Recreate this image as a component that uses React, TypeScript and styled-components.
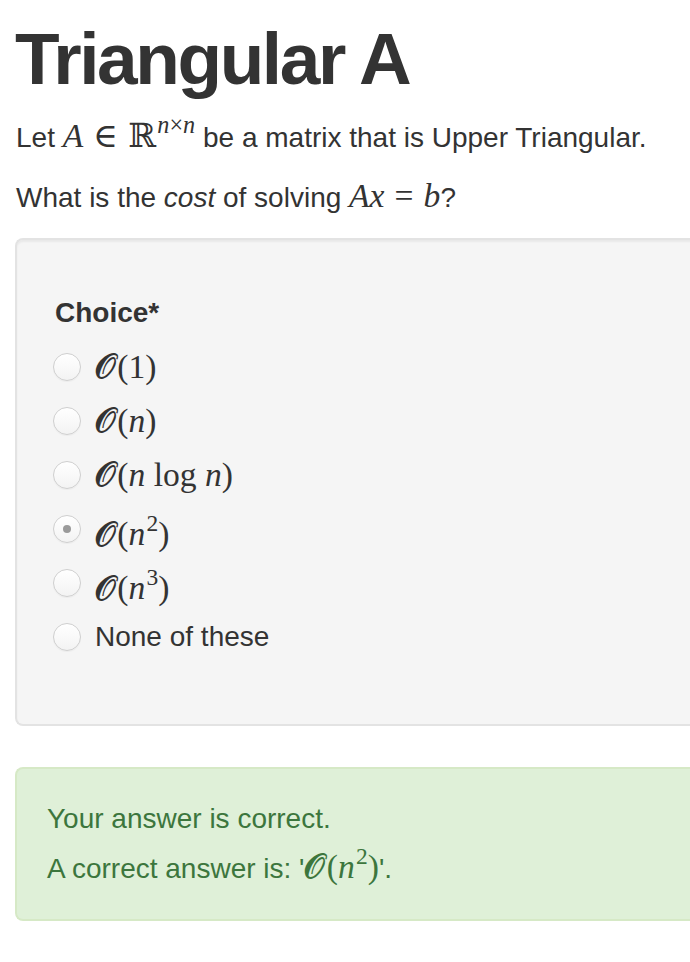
import React from 'react';
import styled, { createGlobalStyle } from 'styled-components';

const GlobalStyle = createGlobalStyle`
  html, body {
    margin: 0;
    padding: 0;
    background: #fff;
    overflow-x: hidden;
  }
  body {
    font-family: "Liberation Sans", Arial, sans-serif;
    font-size: 28px;
    line-height: 40px;
    color: #333;
  }
`;

const Page = styled.div`
  width: calc(100% + 20px);
  padding: 19px 0 40px 15px;
  box-sizing: border-box;
`;

const Title = styled.h1`
  margin: 0 0 20px 0;
  font-size: 73px;
  line-height: 79px;
  font-weight: 700;
  letter-spacing: -2.4px;
  color: #333;
`;

const Para = styled.p`
  margin: 0 0 20px 1px;
`;

// Inline TeX-like math
const Math = styled.span`
  font-family: "Liberation Serif", "DejaVu Serif", serif;
  font-size: 1.2em;
  line-height: 0;
  white-space: nowrap;
`;

const Var = styled.i`
  font-style: italic;
`;

const Cal = styled.span`
  font-family: "DejaVu Serif", "Liberation Serif", serif;
  font-style: normal;
  margin-right: 0.04em;
`;

const Sup = styled.sup<{ $size?: number }>`
  font-size: ${(p) => p.$size ?? 0.7}em;
  line-height: 0;
  vertical-align: 0.6em;
  margin-left: 0.05em;
`;

const Op = styled.span`
  margin: 0 0.3em;
`;

const Well = styled.div`
  background: #f5f5f5;
  border: 2px solid #e3e3e3;
  border-right: none;
  border-radius: 8px 0 0 8px;
  box-shadow: inset 0 2px 2px rgba(0, 0, 0, 0.05);
  padding: 53px 38px 60px 38px;
  margin-bottom: 41px;
`;

const FieldLabel = styled.div`
  font-weight: 700;
  margin-bottom: 7px;
`;

const OptionRow = styled.label`
  display: flex;
  align-items: center;
  height: 54px;
  line-height: 54px;
`;

const Radio = styled.span<{ $checked?: boolean }>`
  flex: none;
  width: 26px;
  height: 26px;
  margin-left: -2px;
  margin-right: 14px;
  border-radius: 50%;
  border: 1px solid #cfcfcf;
  background: linear-gradient(#ffffff, #f3f3f3);
  box-shadow: inset 0 1px 1px rgba(255, 255, 255, 0.8), 0 1px 1px rgba(0, 0, 0, 0.04);
  display: flex;
  align-items: center;
  justify-content: center;

  &::after {
    content: '';
    display: ${(p) => (p.$checked ? 'block' : 'none')};
    width: 8px;
    height: 8px;
    border-radius: 50%;
    background: #9a9a9a;
  }
`;

const Alert = styled.div`
  background: #dff0d8;
  border: 2px solid #d6e9c6;
  border-right: none;
  border-radius: 8px 0 0 8px;
  color: #3c763d;
  padding: 30px 30px;
`;

const AlertLine = styled.div`
  margin-bottom: 10px;
  &:last-child {
    margin-bottom: 0;
  }
`;

const BigO = ({ children }: { children: React.ReactNode }) => (
  <Math>
    <Cal>𝓞</Cal>({children})
  </Math>
);

const options: { key: string; label: React.ReactNode; checked?: boolean }[] = [
  { key: '1', label: <BigO>1</BigO> },
  { key: 'n', label: <BigO><Var>n</Var></BigO> },
  { key: 'nlogn', label: <BigO><Var>n</Var> log <Var>n</Var></BigO> },
  { key: 'n2', label: <BigO><Var>n</Var><Sup>2</Sup></BigO>, checked: true },
  { key: 'n3', label: <BigO><Var>n</Var><Sup>3</Sup></BigO> },
  { key: 'none', label: 'None of these' },
];

export default function App() {
  return (
    <>
      <GlobalStyle />
      <Page>
        <Title>Triangular A</Title>
        <Para>
          Let{' '}
          <Math>
            <Var>A</Var>
            <Op>∈</Op>ℝ<Sup $size={0.72}><Var>n</Var>×<Var>n</Var></Sup>
          </Math>{' '}
          be a matrix that is Upper Triangular.
        </Para>
        <Para>
          What is the <em>cost</em> of solving{' '}
          <Math>
            <Var>Ax</Var>
            <Op>=</Op>
            <Var>b</Var>
          </Math>
          ?
        </Para>

        <Well>
          <FieldLabel>Choice*</FieldLabel>
          {options.map((o) => (
            <OptionRow key={o.key}>
              <Radio $checked={o.checked} />
              {o.label}
            </OptionRow>
          ))}
        </Well>

        <Alert>
          <AlertLine>Your answer is correct.</AlertLine>
          <AlertLine>
            A correct answer is: '
            <BigO>
              <Var>n</Var>
              <Sup>2</Sup>
            </BigO>
            '.
          </AlertLine>
        </Alert>
      </Page>
    </>
  );
}
